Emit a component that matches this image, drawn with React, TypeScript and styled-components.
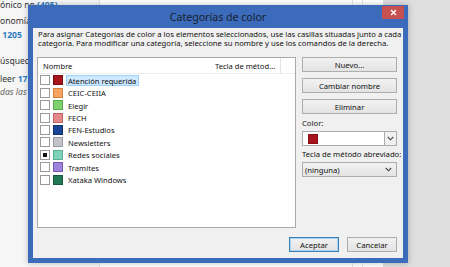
import React from 'react';
import styled, { createGlobalStyle } from 'styled-components';

const GlobalStyle = createGlobalStyle`
  html, body {
    margin: 0;
    padding: 0;
    width: 450px;
    height: 267px;
    overflow: hidden;
    background: #ffffff;
  }
  * {
    box-sizing: border-box;
  }
`;

const FONT = `'Noto Sans', 'Open Sans', sans-serif`;

const Desktop = styled.div`
  position: relative;
  width: 450px;
  height: 267px;
  display: flex;
  font-family: ${FONT};
  overflow: hidden;
`;

const FolderPane = styled.div`
  width: 100px;
  background: #f6f6f6;
  border-right: 1px solid #e2e2e2;
  display: flex;
  flex-direction: column;
  font-size: 8.6px;
  color: #333;
`;

const FolderLine = styled.div<{ top: number }>`
  margin-top: ${({ top }) => top}px;
  height: 10px;
  line-height: 10px;
  white-space: nowrap;
`;

const Count = styled.span`
  color: #2b7bc0;
  font-weight: 700;
`;

const Hint = styled.span`
  font-style: italic;
  color: #666;
`;

const MailPane = styled.div`
  flex: 1;
  background: #ffffff;
  display: flex;
  justify-content: flex-end;
`;

const RuleLine = styled.div<{ gap: number }>`
  width: 1px;
  background: #e4e4e4;
  margin-right: ${({ gap }) => gap}px;
`;

const ReadingPane = styled.div`
  width: 67px;
  background: #dedede;
`;

/* the dialog floats over the Outlook window */
const Dialog = styled.div`
  position: absolute;
  left: 28px;
  top: 5px;
  width: 380px;
  height: 258px;
  background: #3b6bba;
  padding: 0 5px 5px 5px;
  display: flex;
  flex-direction: column;
  box-shadow: 0 0 6px rgba(0, 0, 0, 0.25);
`;

const TitleBar = styled.div`
  height: 23px;
  display: grid;
  grid-template-columns: 1fr auto 1fr;
  align-items: center;
`;

const Title = styled.div`
  grid-column: 2;
  font-size: 10.6px;
  color: #18202e;
  padding-top: 1px;
`;

const CloseButton = styled.div`
  grid-column: 3;
  justify-self: end;
  align-self: start;
  margin-top: 1px;
  margin-right: -1px;
  width: 22px;
  height: 13px;
  background: #c75050;
  display: flex;
  align-items: center;
  justify-content: center;
`;

const Client = styled.div`
  flex: 1;
  background: #f0f0f0;
  display: flex;
  flex-direction: column;
  padding: 2px 6px 6px 4px;
  font-size: 7.7px;
  color: #111;
`;

const Description = styled.div`
  padding-left: 1px;
  line-height: 9.4px;
  height: 27px;
  white-space: nowrap;
`;

const Main = styled.div`
  display: flex;
  gap: 6px;
  height: 171px;
`;

const ListBox = styled.div`
  width: 259px;
  background: #ffffff;
  border: 1px solid #a9a9a9;
  display: flex;
  flex-direction: column;
  font-size: 7.6px;
`;

const ListHeader = styled.div`
  height: 16px;
  display: flex;
  border-bottom: 1px solid #ededed;
`;

const HeaderCell = styled.div<{ w: number; divider?: boolean }>`
  width: ${({ w }) => w}px;
  display: flex;
  align-items: center;
  padding-left: 5px;
  border-right: 1px solid ${({ divider }) => (divider ? '#e3e3e3' : 'transparent')};
  white-space: nowrap;
`;

const Row = styled.div`
  height: 12.45px;
  display: flex;
  align-items: center;
  padding-left: 2px;
`;

const Check = styled.div<{ mixed?: boolean }>`
  width: 10px;
  height: 10px;
  border: 1px solid #9a9a9a;
  background: #ffffff;
  display: flex;
  align-items: center;
  justify-content: center;
  &::after {
    content: '';
    display: ${({ mixed }) => (mixed ? 'block' : 'none')};
    width: 4px;
    height: 4px;
    background: #111;
  }
`;

const Swatch = styled.div<{ color: string; edge: string }>`
  width: 10px;
  height: 10px;
  margin-left: 3px;
  background: ${({ color }) => color};
  border: 1px solid ${({ edge }) => edge};
`;

const Label = styled.div<{ selected?: boolean }>`
  margin-left: 3px;
  padding: 0 2px 0 1px;
  height: 11px;
  line-height: 10px;
  white-space: nowrap;
  background: ${({ selected }) => (selected ? '#cde8ff' : 'transparent')};
  border: 1px solid ${({ selected }) => (selected ? '#99d1ff' : 'transparent')};
`;

const Side = styled.div`
  width: 95px;
  display: flex;
  flex-direction: column;
`;

const Button = styled.div<{ primary?: boolean; mt?: number }>`
  height: 15px;
  margin-top: ${({ mt }) => mt ?? 0}px;
  display: flex;
  align-items: center;
  justify-content: center;
  background: linear-gradient(#f2f2f2, #e3e3e3);
  border: 1px solid ${({ primary }) => (primary ? '#3c7fb1' : '#adadad')};
  box-shadow: ${({ primary }) => (primary ? 'inset 0 0 0 1px #a9d3f5' : 'none')};
  white-space: nowrap;
`;

const FieldLabel = styled.div<{ mt: number }>`
  margin-top: ${({ mt }) => mt}px;
  height: 10px;
  line-height: 10px;
  white-space: nowrap;
`;

const ColorCombo = styled.div`
  margin-top: 3px;
  height: 15px;
  display: flex;
  background: #ffffff;
  border: 1px solid #acacac;
`;

const ComboValue = styled.div`
  flex: 1;
  display: flex;
  align-items: center;
  padding-left: 5px;
`;

const ComboSwatch = styled.div`
  width: 10px;
  height: 10px;
  background: #a8141b;
  border: 1px solid #8a0f14;
`;

const ComboArrow = styled.div`
  width: 12px;
  background: #f0f0f0;
  border-left: 1px solid #acacac;
  display: flex;
  align-items: center;
  justify-content: center;
`;

const Select = styled.div`
  margin-top: 3px;
  height: 15px;
  display: flex;
  align-items: center;
  justify-content: space-between;
  padding: 0 4px 0 2px;
  background: linear-gradient(#f2f2f2, #e3e3e3);
  border: 1px solid #adadad;
`;

const Footer = styled.div`
  margin-top: auto;
  display: flex;
  justify-content: flex-end;
  gap: 8px;
`;

const FooterButton = styled(Button)`
  width: 50px;
`;

const Chevron = () => (
  <svg width="7" height="5" viewBox="0 0 7 5">
    <polyline points="0.8,1 3.5,3.8 6.2,1" fill="none" stroke="#444" strokeWidth="1.1" />
  </svg>
);

const categories = [
  { name: 'Atención requerida', color: '#a8141b', edge: '#7e0d12', selected: true },
  { name: 'CEIC-CEIIA', color: '#f5a462', edge: '#d2813f' },
  { name: 'Elegir', color: '#7fd06e', edge: '#5aa94a' },
  { name: 'FECH', color: '#e38a8a', edge: '#c46060' },
  { name: 'FEN-Estudios', color: '#1b4594', edge: '#12336f' },
  { name: 'Newsletters', color: '#c3c3cb', edge: '#9a9aa3' },
  { name: 'Redes sociales', color: '#7fd1b7', edge: '#55ad92', mixed: true },
  { name: 'Tramites', color: '#9d84d8', edge: '#7558b8' },
  { name: 'Xataka Windows', color: '#227a56', edge: '#165a3e' },
];

const App: React.FC = () => {
  return (
    <>
      <GlobalStyle />
      <Desktop>
        <FolderPane>
          <FolderLine top={0}>
            ónico no <Count>(405)</Count>
          </FolderLine>
          <FolderLine top={6}>onomía</FolderLine>
          <FolderLine top={4}>
            <Count>&nbsp;1205</Count>
          </FolderLine>
          <FolderLine top={16}>úsqueda</FolderLine>
          <FolderLine top={8}>
            leer <Count>17</Count>
          </FolderLine>
          <FolderLine top={3}>
            <Hint>das las</Hint>
          </FolderLine>
        </FolderPane>
        <MailPane>
          <RuleLine gap={9} />
          <RuleLine gap={20} />
        </MailPane>
        <ReadingPane />

        <Dialog>
          <TitleBar>
            <Title>Categorías de color</Title>
            <CloseButton>
              <svg width="7" height="7" viewBox="0 0 7 7">
                <path d="M1 1 L6 6 M6 1 L1 6" stroke="#ffffff" strokeWidth="1.4" />
              </svg>
            </CloseButton>
          </TitleBar>
          <Client>
            <Description>
              Para asignar Categorías de color a los elementos seleccionados, use las casillas situadas junto a cada
              <br />
              categoría. Para modificar una categoría, seleccione su nombre y use los comandos de la derecha.
            </Description>
            <Main>
              <ListBox>
                <ListHeader>
                  <HeaderCell w={172}>Nombre</HeaderCell>
                  <HeaderCell w={71} divider>
                    Tecla de métod...
                  </HeaderCell>
                </ListHeader>
                {categories.map((c) => (
                  <Row key={c.name}>
                    <Check mixed={c.mixed} />
                    <Swatch color={c.color} edge={c.edge} />
                    <Label selected={c.selected}>{c.name}</Label>
                  </Row>
                ))}
              </ListBox>
              <Side>
                <Button>Nuevo...</Button>
                <Button mt={6}>Cambiar nombre</Button>
                <Button mt={6}>Eliminar</Button>
                <FieldLabel mt={4}>Color:</FieldLabel>
                <ColorCombo>
                  <ComboValue>
                    <ComboSwatch />
                  </ComboValue>
                  <ComboArrow>
                    <Chevron />
                  </ComboArrow>
                </ColorCombo>
                <FieldLabel mt={3}>Tecla de método abreviado:</FieldLabel>
                <Select>
                  <span>(ninguna)</span>
                  <Chevron />
                </Select>
              </Side>
            </Main>
            <Footer>
              <FooterButton primary>Aceptar</FooterButton>
              <FooterButton>Cancelar</FooterButton>
            </Footer>
          </Client>
        </Dialog>
      </Desktop>
    </>
  );
};

export default App;
